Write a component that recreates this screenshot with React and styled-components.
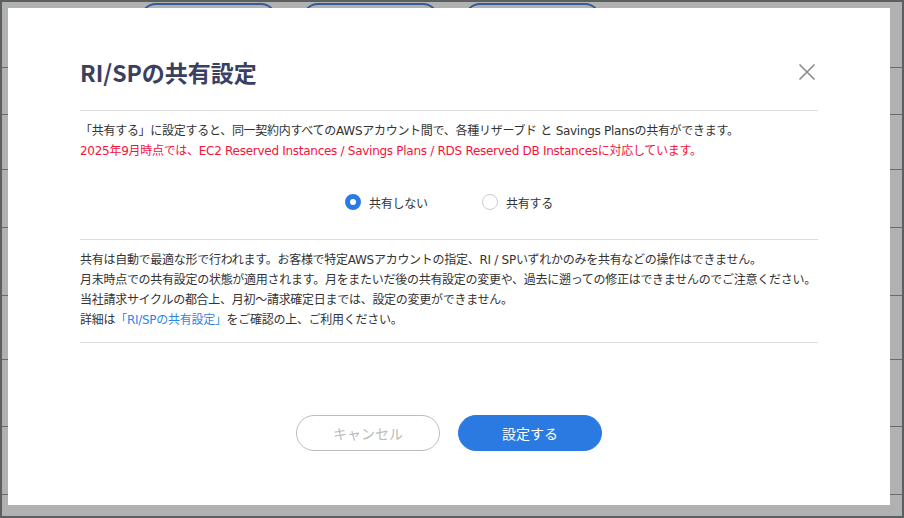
import React, { useState } from 'react';
import styled, { createGlobalStyle } from 'styled-components';

const GlobalStyle = createGlobalStyle`
  html, body {
    margin: 0;
    padding: 0;
  }
  body {
    font-family: "DejaVu Sans", "Noto Sans CJK JP", sans-serif;
    color: #333;
  }
  * {
    box-sizing: border-box;
  }
`;

const Frame = styled.div`
  position: relative;
  width: 904px;
  height: 518px;
  border: 2px solid #5a5f5f;
  background: #fff;
  overflow: hidden;
`;

// page that sits behind the overlay
const Page = styled.div`
  display: flex;
  flex-direction: column;
`;

const Toolbar = styled.div`
  display: flex;
  gap: 25px;
  height: 65px;
  padding: 1px 0 0 138px;
`;

const PageButton = styled.div`
  width: 137px;
  height: 32px;
  border: 2px solid #4d82dc;
  border-radius: 16px;
`;

const PageRow = styled.div`
  height: ${(p) => p.$h}px;
  border-top: 1px solid #999;
`;

const Overlay = styled.div`
  position: absolute;
  inset: 0;
  display: flex;
  padding: 6px 12px 11px 6px;
  background: rgba(0, 0, 0, 0.306);
`;

const Modal = styled.div`
  flex: 1;
  min-width: 0;
  display: flex;
  flex-direction: column;
  padding: 0 72px 54px;
  background: #fff;
`;

const Header = styled.div`
  display: flex;
  align-items: center;
  justify-content: space-between;
  padding: 48px 0 22px;
  border-bottom: 1px solid #ddd;
`;

const Title = styled.h2`
  margin: 0;
  font-family: "Noto Sans CJK JP", sans-serif;
  font-size: 23px;
  line-height: 32px;
  font-weight: 700;
  color: #3a4060;
`;

const CloseButton = styled.button`
  display: flex;
  width: 18px;
  height: 18px;
  margin-right: 2px;
  padding: 0;
  border: none;
  background: none;
  cursor: pointer;
`;

const Intro = styled.div`
  padding-top: 10px;
  font-size: 12px;
  line-height: 20px;
`;

const Line = styled.p`
  margin: 0;
  white-space: nowrap;
  letter-spacing: -0.28px;
  color: ${(p) => (p.$warn ? '#f5123c' : '#333')};
`;

const RadioGroup = styled.div`
  display: flex;
  justify-content: center;
  gap: 54px;
  padding: 31px 0 27px;
  border-bottom: 1px solid #ddd;
`;

const RadioLabel = styled.label`
  display: flex;
  align-items: center;
  gap: 8px;
  height: 20px;
  font-family: "Noto Sans CJK JP", sans-serif;
  font-size: 12px;
  letter-spacing: -0.2px;
  color: #333;
  cursor: pointer;
`;

const RadioDot = styled.span`
  width: 16px;
  height: 16px;
  border-radius: 50%;
  background: #fff;
  border: ${(p) => (p.$on ? '5px solid #2a7ae2' : '1px solid #ccc')};
`;

const Notes = styled.div`
  padding: 10px 0 12px;
  font-size: 12px;
  line-height: 20px;
  border-bottom: 1px solid #ddd;
`;

const Link = styled.a`
  color: #2f86e4;
  text-decoration: none;
`;

const Footer = styled.div`
  display: flex;
  justify-content: center;
  gap: 18px;
  margin-top: auto;
`;

const Button = styled.button`
  width: 144px;
  height: 36px;
  border-radius: 18px;
  font-family: "Noto Sans CJK JP", sans-serif;
  font-size: 14px;
  cursor: pointer;
  border: 1px solid ${(p) => (p.$primary ? '#2a7ae2' : '#bbb')};
  background: ${(p) => (p.$primary ? '#2a7ae2' : '#fff')};
  color: ${(p) => (p.$primary ? '#fff' : '#bbb')};
`;

const rowHeights = [47, 55, 58, 68, 64, 67, 68, 40];

const options = [
  { value: 'off', label: '共有しない' },
  { value: 'on', label: '共有する' },
];

const App = () => {
  const [share, setShare] = useState('off');

  return (
    <>
      <GlobalStyle />
      <Frame>
        <Page>
          <Toolbar>
            <PageButton />
            <PageButton />
            <PageButton />
          </Toolbar>
          {rowHeights.map((h, i) => (
            <PageRow key={i} $h={h} />
          ))}
        </Page>
        <Overlay>
          <Modal>
            <Header>
              <Title>RI/SPの共有設定</Title>
              <CloseButton aria-label="閉じる">
                <svg width="18" height="18" viewBox="0 0 18 18">
                  <path d="M1.5 1.5 L16.5 16.5 M16.5 1.5 L1.5 16.5" stroke="#8a8a8a" strokeWidth="1.6" fill="none" />
                </svg>
              </CloseButton>
            </Header>
            <Intro>
              <Line>「共有する」に設定すると、同一契約内すべてのAWSアカウント間で、各種リザーブド と Savings Plansの共有ができます。</Line>
              <Line $warn>2025年9月時点では、EC2 Reserved Instances / Savings Plans / RDS Reserved DB Instancesに対応しています。</Line>
            </Intro>
            <RadioGroup>
              {options.map((o) => (
                <RadioLabel key={o.value} onClick={() => setShare(o.value)}>
                  <RadioDot $on={share === o.value} />
                  {o.label}
                </RadioLabel>
              ))}
            </RadioGroup>
            <Notes>
              <Line>共有は自動で最適な形で行われます。お客様で特定AWSアカウントの指定、RI / SPいずれかのみを共有などの操作はできません。</Line>
              <Line>月末時点での共有設定の状態が適用されます。月をまたいだ後の共有設定の変更や、過去に遡っての修正はできませんのでご注意ください。</Line>
              <Line>当社請求サイクルの都合上、月初～請求確定日までは、設定の変更ができません。</Line>
              <Line>
                詳細は<Link href="#">「RI/SPの共有設定」</Link>をご確認の上、ご利用ください。
              </Line>
            </Notes>
            <Footer>
              <Button>キャンセル</Button>
              <Button $primary>設定する</Button>
            </Footer>
          </Modal>
        </Overlay>
      </Frame>
    </>
  );
};

export default App;
